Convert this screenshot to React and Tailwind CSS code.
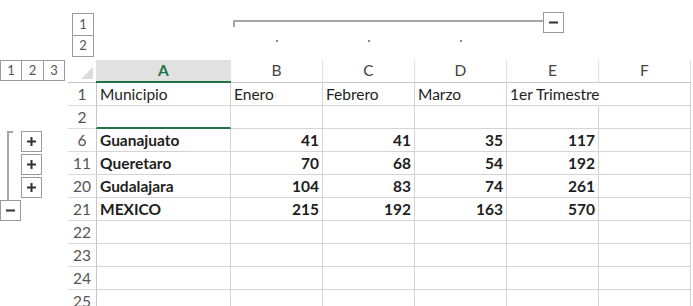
import React from 'react';

const LevelBox = ({ children, className = '' }) => (
  <div className={`flex items-center justify-center border border-[#9a9a9a] bg-white text-[13px] text-[#555] ${className}`}>
    {children}
  </div>
);

const Toggle = ({ plus, className = '' }) => (
  <div className={`flex h-[21px] w-[21px] items-center justify-center border border-[#9a9a9a] bg-white ${className}`}>
    <svg width="11" height="11" viewBox="0 0 11 11">
      <rect x="1" y="4.5" width="9" height="2" fill="#333" />
      {plus && <rect x="4.5" y="1" width="2" height="9" fill="#333" />}
    </svg>
  </div>
);

const Spreadsheet = () => {
  const widths = ['w-[135px]', 'w-[92px]', 'w-[92px]', 'w-[92px]', 'w-[92px]', 'w-[92px]'];
  const letters = ['A', 'B', 'C', 'D', 'E', 'F'];

  const rows = [
    { n: '1', cells: ['Municipio', 'Enero', 'Febrero', 'Marzo', '1er Trimestre', ''], spill: 4 },
    { n: '2', cells: ['', '', '', '', '', ''], selected: true },
    { n: '6', cells: ['Guanajuato', 41, 41, 35, 117, ''], bold: true, outline: 'top' },
    { n: '11', cells: ['Queretaro', 70, 68, 54, 192, ''], bold: true, outline: 'mid' },
    { n: '20', cells: ['Gudalajara', 104, 83, 74, 261, ''], bold: true, outline: 'mid' },
    { n: '21', cells: ['MEXICO', 215, 192, 163, 570, ''], bold: true, outline: 'minus' },
    { n: '22', cells: ['', '', '', '', '', ''] },
    { n: '23', cells: ['', '', '', '', '', ''] },
    { n: '24', cells: ['', '', '', '', '', ''] },
    { n: '25', cells: ['', '', '', '', '', ''] },
  ];

  const outlineCell = (kind) => {
    if (kind === 'top') {
      return (
        <div className="flex h-full w-[68px] shrink-0">
          <div className="ml-[7px] mt-[2px] h-[21px] w-[6px] border-l-2 border-t-2 border-[#a6a6a6]" />
          <Toggle plus className="ml-[8px] mt-[2px]" />
        </div>
      );
    }
    if (kind === 'mid') {
      return (
        <div className="flex h-full w-[68px] shrink-0">
          <div className="ml-[7px] h-full w-[6px] border-l-2 border-[#a6a6a6]" />
          <Toggle plus className="ml-[8px] mt-[2px]" />
        </div>
      );
    }
    if (kind === 'minus') {
      return (
        <div className="flex h-full w-[68px] shrink-0 flex-col">
          <div className="ml-[7px] h-[2px] w-[2px] bg-[#a6a6a6]" />
          <Toggle />
        </div>
      );
    }
    return <div className="w-[68px] shrink-0" />;
  };

  return (
    <div className="h-[306px] w-[693px] overflow-hidden bg-white font-['Lato','Liberation_Sans',sans-serif] text-[#1e1e1e]">
      {/* Column outline band */}
      <div className="flex h-[60px]">
        <div className="ml-[72px] flex flex-col pt-[13px]">
          <LevelBox className="h-[23px] w-[22px]">1</LevelBox>
          <LevelBox className="-mt-px h-[22px] w-[22px]">2</LevelBox>
        </div>
        <div className="ml-[137px] flex flex-col pt-[12px]">
          <div className="flex items-start">
            <div className="ml-[2px] mt-[8px] h-[7px] w-[310px] border-l-2 border-t-2 border-[#a6a6a6]" />
            <Toggle />
          </div>
          <div className="mt-[7px] flex">
            {[0, 1, 2].map((i) => (
              <div key={i} className="flex w-[92px] justify-center">
                <div className="h-[2px] w-[2px] bg-[#8a8a8a]" />
              </div>
            ))}
          </div>
        </div>
      </div>

      {/* Column header row */}
      <div className="flex h-[23px]">
        <div className="flex w-[68px] shrink-0">
          <LevelBox className="h-[21px] w-[22px]">1</LevelBox>
          <LevelBox className="-ml-px h-[21px] w-[23px]">2</LevelBox>
          <LevelBox className="-ml-px h-[21px] w-[22px]">3</LevelBox>
        </div>
        <div className="relative w-[28px] shrink-0 border-b border-[#c6c6c6]">
          <div className="absolute bottom-[3px] right-[3px] h-0 w-0 border-b-[12px] border-l-[12px] border-b-[#dcdcdc] border-l-transparent" />
        </div>
        {letters.map((l, i) => (
          <div
            key={l}
            className={`${widths[i]} flex shrink-0 items-center justify-center text-[15.5px] ${
              i === 0
                ? 'border-b-2 border-[#217346] bg-[#e1e1e1] font-bold text-[#217346]'
                : 'border-b border-r border-b-[#c6c6c6] border-r-[#e1e1e1] text-[#444]'
            }`}
          >
            {l}
          </div>
        ))}
      </div>

      {/* Rows */}
      {rows.map((row) => (
        <div key={row.n} className="flex h-[23px]">
          {outlineCell(row.outline)}
          <div className="flex w-[28px] shrink-0 items-center justify-center border-b border-[#dadada] pt-px text-[15.5px] text-[#555]">
            {row.n}
          </div>
          {row.cells.map((c, i) => (
            <div
              key={i}
              className={`${widths[i]} relative flex shrink-0 items-center overflow-visible whitespace-nowrap px-[3px] pt-px text-[15.5px] ${
                row.spill === i ? 'z-10 border-r border-r-transparent' : 'border-r border-[#d4d4d4]'
              } ${i === 0 ? 'border-l border-l-[#c6c6c6]' : ''} ${
                row.selected && i === 0 ? 'border-b-2 border-b-[#217346]' : 'border-b border-b-[#d4d4d4]'
              } ${typeof c === 'number' ? 'justify-end' : 'justify-start'} ${row.bold ? 'font-bold' : ''}`}
            >
              {c}
            </div>
          ))}
        </div>
      ))}
    </div>
  );
};

export default function App() {
  return <Spreadsheet />;
}
